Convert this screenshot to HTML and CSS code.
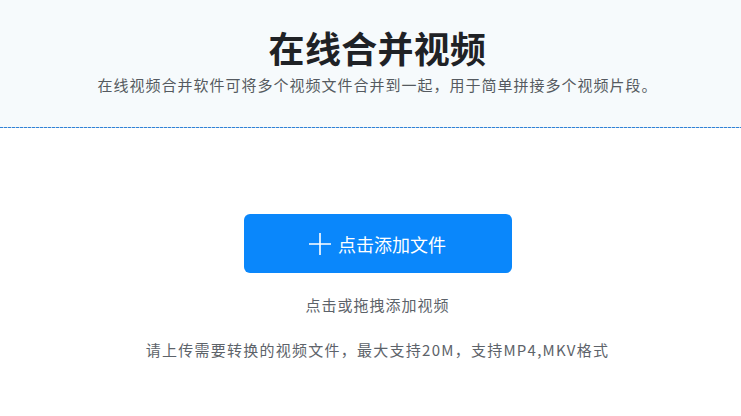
FILE: index.html
```html
<!DOCTYPE html>
<html lang="zh-CN">
<head>
<meta charset="utf-8">
<title>在线合并视频</title>
<link rel="stylesheet" href="styles.css">
</head>
<body>
<header class="hero">
  <h1 class="title">在线合并视频</h1>
  <p class="subtitle">在线视频合并软件可将多个视频文件合并到一起，用于简单拼接多个视频片段。</p>
</header>
<div class="divider"></div>
<main class="upload">
  <button class="btn" type="button">
    <svg class="plus" width="22" height="22" viewBox="0 0 22 22"><path d="M11 0v22M0 11h22" stroke="#fff" stroke-width="1.6" fill="none"/></svg>
    <span>点击添加文件</span>
  </button>
  <p class="hint">点击或拖拽添加视频</p>
  <p class="note">请上传需要转换的视频文件，最大支持20M，支持MP4,MKV格式</p>
</main>
</body>
</html>
```
FILE: styles.css
```css
html, body { margin: 0; padding: 0; }
body {
  background: #fff;
  font-family: "Noto Sans CJK SC", "Noto Sans", sans-serif;
  width: 741px;
}
.hero {
  background: #f6fafc;
  height: 127px;
  display: flex;
  flex-direction: column;
  align-items: center;
  box-sizing: border-box;
  padding: 22px 0 0 14px;
}
.title {
  margin: 0;
  font-size: 36px;
  line-height: 50px;
  font-weight: 700;
  color: #1f2226;
  letter-spacing: 0.3px;
}
.subtitle {
  margin: 2px 0 0;
  font-size: 15px;
  line-height: 22px;
  letter-spacing: 1px;
  color: #555a60;
}
.divider {
  height: 1px;
  background: repeating-linear-gradient(90deg, #2f83d9 0 3px, #c9d3dd 3px 4px);
}
.upload {
  display: flex;
  flex-direction: column;
  align-items: center;
  padding: 86px 0 0 14px;
}
.btn {
  width: 268px;
  height: 59px;
  border: 0;
  border-radius: 6px;
  background: #0a87fb;
  color: #fff;
  font-family: inherit;
  font-size: 18px;
  display: flex;
  align-items: center;
  justify-content: center;
  gap: 7px;
  padding: 0;
}
.btn span { line-height: 24px; }
.plus { display: block; }
.hint {
  margin: 21px 0 0;
  font-size: 15px;
  line-height: 22px;
  letter-spacing: 1px;
  color: #5d636a;
}
.note {
  margin: 23px 0 0;
  font-size: 15px;
  line-height: 22px;
  letter-spacing: 1.25px;
  color: #5d636a;
}
```
